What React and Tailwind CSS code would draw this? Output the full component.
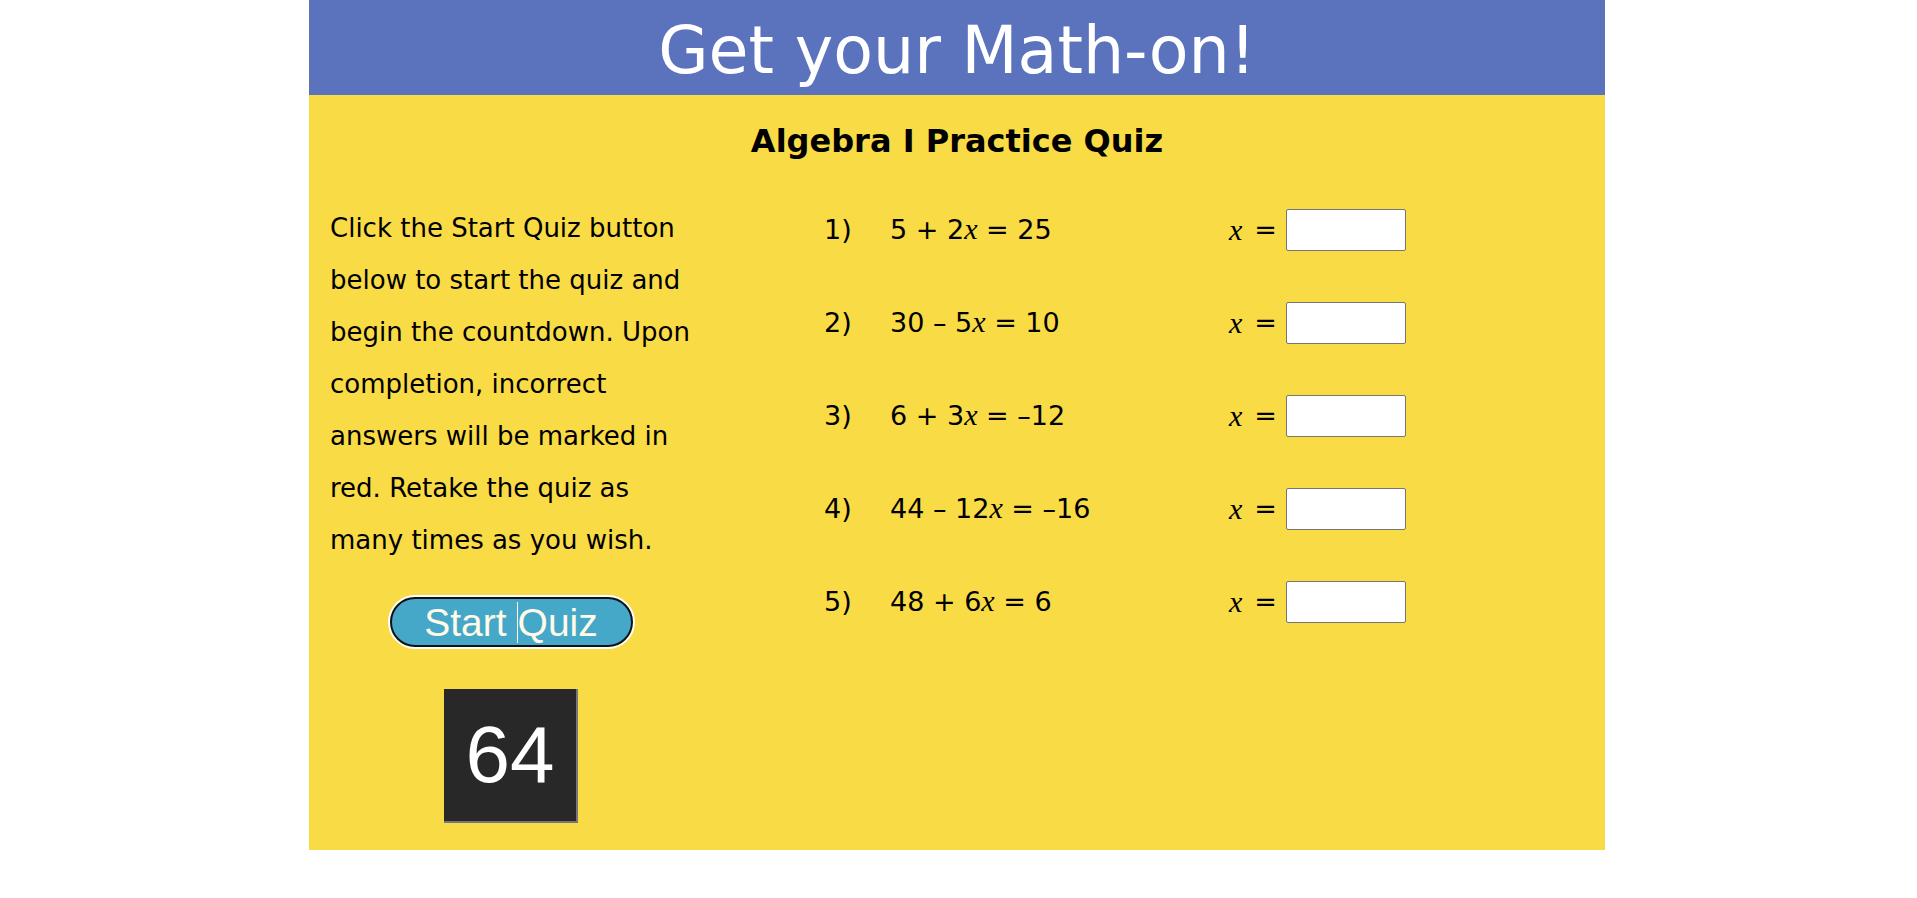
import React from 'react';

const problems = [
  { n: '1)', parts: ['5 + 2', '= 25'] },
  { n: '2)', parts: ['30 – 5', '= 10'] },
  { n: '3)', parts: ['6 + 3', '= –12'] },
  { n: '4)', parts: ['44 – 12', '= –16'] },
  { n: '5)', parts: ['48 + 6', '= 6'] },
];

const X = () => (
  <span className="font-['Liberation_Serif',serif] italic text-[30px] leading-none">x</span>
);

const App = () => {
  return (
    <div className="w-[1296px] ml-[309px] font-['DejaVu_Sans',sans-serif] text-black">
      {/* Header */}
      <header className="h-[95px] bg-[#5b73bc] flex items-start justify-center">
        <h1 className="text-[65px] leading-[95px] pt-[3px] text-white">Get your Math-on!</h1>
      </header>

      {/* Quiz body */}
      <main className="bg-[#f9db46] pt-[26px] pb-[27px]">
        <h2 className="text-center text-[32px] leading-[40px] font-bold">Algebra I Practice Quiz</h2>

        <div className="flex items-start mt-[41px]">
          {/* Instructions + controls */}
          <div className="ml-[21px] w-[362px] flex flex-col items-center">
            <p className="text-[26px] leading-[52px] self-start">
              Click the Start Quiz button below to start the quiz and begin the countdown. Upon completion, incorrect
              answers will be marked in red. Retake the quiz as many times as you wish.
            </p>

            <button className="mt-[29px] w-[247px] h-[54px] rounded-full border-2 border-white bg-white p-0">
              <span className="flex h-full w-full items-center justify-center rounded-full border-2 border-[#111] bg-[#46a8c8] font-['Liberation_Sans',sans-serif] text-[39px] leading-none text-[#fffbe8]">
                Start <span className="ml-[10px] border-l border-[#fffbe8] h-[41px] flex items-center">Quiz</span>
              </span>
            </button>

            <div className="mt-[40px] w-[134px] h-[134px] bg-[#282828] border-r-2 border-b-2 border-[#777] flex items-center justify-center font-['Liberation_Sans',sans-serif] text-[80px] leading-none text-white">
              64
            </div>
          </div>

          {/* Problems */}
          <div className="ml-[132px] pt-[7px] flex flex-col gap-[51px]">
            {problems.map((p) => (
              <div key={p.n} className="flex items-center h-[42px] text-[27px] leading-[32px]">
                <span className="w-[66px]">{p.n}</span>
                <span className="w-[339px] whitespace-pre">
                  {p.parts[0]}
                  <X /> {p.parts[1]}
                </span>
                <X />
                <span className="ml-[12px]">=</span>
                <input
                  type="text"
                  className="ml-[9px] w-[120px] h-[42px] bg-white border border-[#767676] rounded-[2px]"
                />
              </div>
            ))}
          </div>
        </div>
      </main>
    </div>
  );
};

export default App;
